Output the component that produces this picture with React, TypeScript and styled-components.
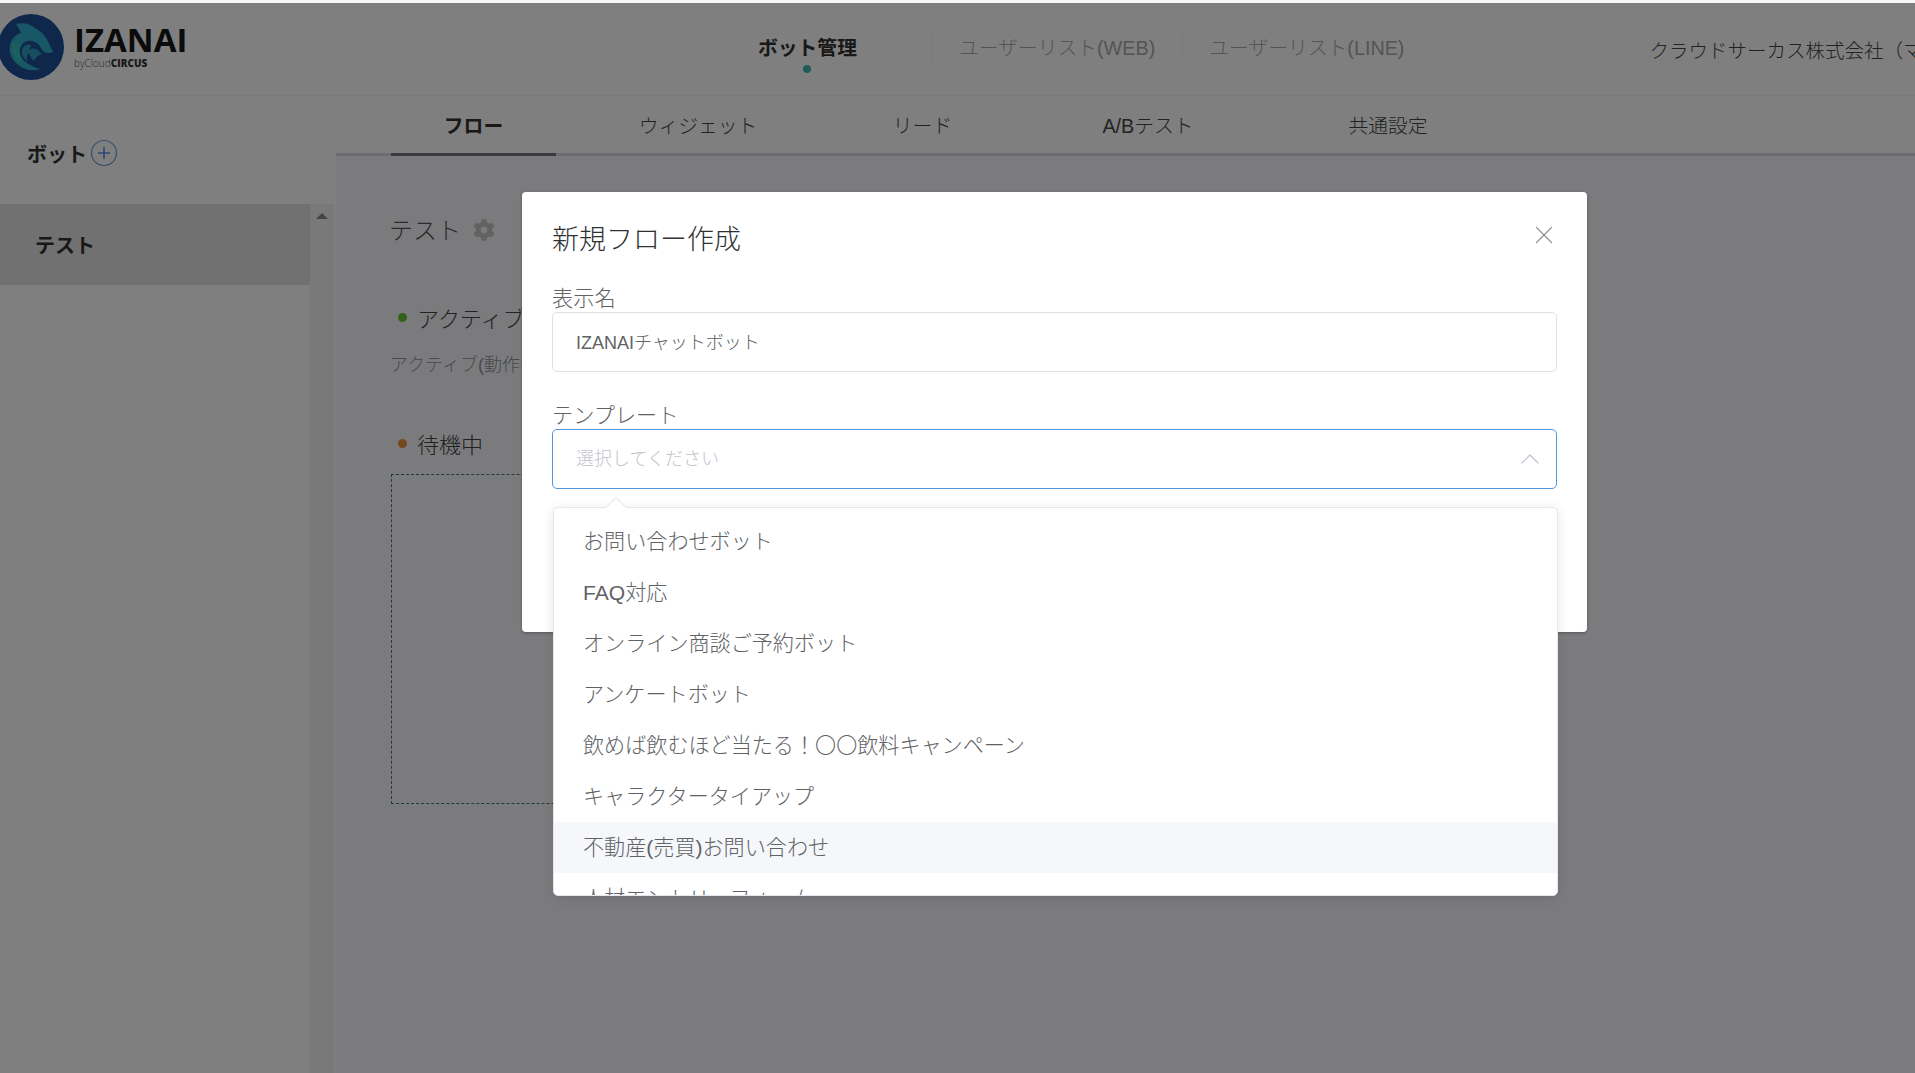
import React from "react";
import styled, { createGlobalStyle } from "styled-components";
import { FaCog } from "react-icons/fa";
import { X, ChevronUp } from "lucide-react";

const FONT = `"Liberation Sans", "Noto Sans CJK JP", sans-serif`;

const Global = createGlobalStyle`
  html, body { margin: 0; padding: 0; height: 100%; overflow: hidden; background: #fff; }
  body { font-family: ${FONT}; font-weight: 300; }
  * { box-sizing: border-box; }
`;

const Page = styled.div`
  width: 1915px;
  height: 1073px;
  padding-top: 3px;
  display: flex;
  flex-direction: column;
  overflow: hidden;
  position: relative;
  background: #f6f7fa;
`;

const Header = styled.header`
  height: 93px;
  flex: none;
  display: flex;
  align-items: center;
  background: #fff;
  border-bottom: 1px solid #f2f2f2;
  white-space: nowrap;
  overflow: hidden;
`;

const Logo = styled.div`
  width: 760px;
  flex: none;
  display: flex;
  align-items: center;
  gap: 10px;
  padding-bottom: 4px;
  margin-left: -2px;
`;

const LogoWords = styled.div`
  display: flex;
  flex-direction: column;
  gap: 2px;
`;

const LogoName = styled.span`
  font-family: "Open Sans", sans-serif;
  font-size: 33px;
  line-height: 30px;
  font-weight: 700;
  color: #161616;
`;

const LogoBy = styled.span`
  font-family: "Open Sans", sans-serif;
  font-size: 10px;
  line-height: 12px;
  color: #555;
  b { color: #333; font-weight: 800; }
`;

const NavItem = styled.a<{ $active?: boolean; $divider?: boolean }>`
  position: relative;
  display: flex;
  align-items: center;
  font-size: 19.8px;
  height: 28px;
  flex: none;
  color: ${(p) => (p.$active ? "#303133" : "#a8a8a8")};
  font-weight: ${(p) => (p.$active ? 700 : 300)};
  padding: ${(p) => (p.$active ? "0 75px 0 0" : "0 27px 0 26px")};
  border-right: ${(p) => (p.$divider ? "1px solid #f0f0f0" : "0")};
  margin-top: -6px;
`;

const ActiveDot = styled.span`
  position: absolute;
  left: 45px;
  top: 33px;
  width: 8px;
  height: 8px;
  border-radius: 50%;
  background: #43b4b4;
`;

const Company = styled.span`
  flex: none;
  margin-left: 218px;
  font-size: 19.5px;
  color: #454545;
`;

const Body = styled.div`
  flex: 1;
  display: flex;
  min-height: 0;
`;

const Sidebar = styled.aside`
  width: 336px;
  flex: none;
  display: flex;
  flex-direction: column;
  background: #fff;
`;

const SideHead = styled.div`
  height: 108px;
  flex: none;
  display: flex;
  align-items: center;
  gap: 3px;
  padding: 6px 0 0 27px;
  font-size: 20px;
  font-weight: 700;
  color: #333;
`;

const SideScroll = styled.div`
  flex: 1;
  display: flex;
`;

const SideList = styled.div`
  width: 310px;
  flex: none;
`;

const SideItem = styled.div`
  height: 81px;
  display: flex;
  align-items: center;
  padding-left: 35px;
  background: #e2e2e2;
  font-size: 20px;
  font-weight: 700;
  color: #303133;
`;

const ScrollTrack = styled.div`
  flex: 1;
  background: #f3f3f3;
  margin-right: 2px;
  position: relative;
`;

const ScrollArrow = styled.span`
  position: absolute;
  left: 6px;
  top: 9px;
  border-left: 6px solid transparent;
  border-right: 6px solid transparent;
  border-bottom: 6px solid #888;
`;

const Main = styled.main`
  flex: 1;
  min-width: 0;
  display: flex;
  flex-direction: column;
`;

const TabBar = styled.nav`
  height: 60px;
  flex: none;
  display: flex;
  gap: 31px;
  padding-left: 55px;
  background: #fff;
  border-bottom: 3px solid #d8dade;
`;

const Tab = styled.a<{ $w: number; $active?: boolean }>`
  width: ${(p) => p.$w}px;
  flex: none;
  height: 60px;
  display: flex;
  align-items: center;
  justify-content: center;
  font-size: 19.8px;
  color: ${(p) => (p.$active ? "#303133" : "#444")};
  font-weight: ${(p) => (p.$active ? 700 : 300)};
  border-bottom: 3px solid ${(p) => (p.$active ? "#72777e" : "transparent")};
`;

const Content = styled.div`
  padding: 55px 0 0 55px;
  display: flex;
  flex-direction: column;
  align-items: flex-start;
`;

const FlowTitle = styled.div`
  display: flex;
  align-items: center;
  gap: 12px;
  height: 34px;
  margin-left: -2px;
  font-size: 24px;
  color: #555;
  svg { color: #c4c4c4; margin-top: 4px; }
`;

const StatusRow = styled.div<{ $top?: number }>`
  display: flex;
  align-items: center;
  gap: 10px;
  padding-left: 7px;
  height: 32px;
  margin-top: ${(p) => p.$top ?? 0}px;
  font-size: 22px;
  color: #444;
`;

const Dot = styled.span<{ $color: string }>`
  width: 9px;
  height: 9px;
  border-radius: 50%;
  background: ${(p) => p.$color};
`;

const Desc = styled.div`
  font-size: 18px;
  color: #909399;
  height: 24px;
  line-height: 24px;
  margin: 20px 0 50px -1px;
`;

const DropZone = styled.div`
  width: 500px;
  height: 330px;
  margin-top: 15px;
  border: 1px dashed #3f7a63;
`;

const Overlay = styled.div`
  position: absolute;
  inset: 3px 0 0 0;
  background: rgba(0, 0, 0, 0.5);
  z-index: 10;
`;

const Modal = styled.div`
  position: absolute;
  z-index: 20;
  left: 522px;
  top: 192px;
  width: 1065px;
  height: 440px;
  padding: 28px 30px 0;
  background: #fff;
  border-radius: 4px;
  box-shadow: 0 1px 3px rgba(0, 0, 0, 0.3);
`;

const ModalTitle = styled.div`
  font-size: 27px;
  line-height: 40px;
  color: #303133;
  margin-bottom: 26px;
`;

const CloseButton = styled.button`
  position: absolute;
  right: 28px;
  top: 28px;
  width: 30px;
  height: 30px;
  padding: 0;
  display: flex;
  align-items: center;
  justify-content: center;
  border: 0;
  background: transparent;
  color: #909399;
`;

const Label = styled.div`
  height: 26px;
  line-height: 26px;
  font-size: 21.2px;
  color: #606266;
  overflow: hidden;
`;

const Field = styled.div<{ $focus?: boolean }>`
  position: relative;
  height: 60px;
  width: 1005px;
  display: flex;
  align-items: center;
  justify-content: space-between;
  padding: 0 10px 0 23px;
  border: 1px solid ${(p) => (p.$focus ? "#4f96e0" : "#dcdfe6")};
  border-radius: 5px;
  font-size: 18px;
  color: #606266;
  margin-bottom: 31px;
`;

const FieldText = styled.span`
  margin-top: -2px;
`;

const Placeholder = styled(FieldText)`
  color: #c0c4cc;
  margin-top: -5px;
`;

const Dropdown = styled.div`
  position: absolute;
  left: 0;
  top: 77px;
  width: 1005px;
  height: 389px;
  background: #fff;
  border: 1px solid #e4e7ed;
  border-radius: 5px;
  box-shadow: 0 2px 12px rgba(0, 0, 0, 0.1);
  &::before {
    content: "";
    position: absolute;
    left: 54px;
    top: -8px;
    width: 15px;
    height: 15px;
    background: #fff;
    border-left: 1px solid #e4e7ed;
    border-top: 1px solid #e4e7ed;
    transform: rotate(45deg);
  }
`;

const Menu = styled.ul`
  position: relative;
  list-style: none;
  margin: 0;
  padding: 8px 0 0;
  height: 100%;
  overflow: hidden;
`;

const MenuItem = styled.li<{ $hover?: boolean }>`
  height: 51px;
  line-height: 51px;
  padding-left: 29px;
  font-size: 21.1px;
  color: #606266;
  background: ${(p) => (p.$hover ? "#f5f7fa" : "transparent")};
`;

const templates = [
  "お問い合わせボット",
  "FAQ対応",
  "オンライン商談ご予約ボット",
  "アンケートボット",
  "飲めば飲むほど当たる！〇〇飲料キャンペーン",
  "キャラクタータイアップ",
  "不動産(売買)お問い合わせ",
  "人材エントリーフォーム",
];

const tabs = [
  { label: "フロー", w: 165, active: true },
  { label: "ウィジェット", w: 222 },
  { label: "リード", w: 165 },
  { label: "A/Bテスト", w: 224 },
  { label: "共通設定", w: 194 },
];

const LogoMark = () => (
  <svg width="66" height="66" viewBox="0 0 66 66" aria-hidden="true">
    <circle cx="33" cy="33" r="33" fill="#1c4f96" />
    <path
      d="M18 10C26 8 32 10 37 14C45 18 50 26 52 32L55 38C51 40 46 39 44 36C42 30 36 26 30 27C24 28 21 34 22 40C24 47 32 52 42 55C33 58 24 55 18 49C12 43 10 35 13 28C15 23 18 21 23 19C22 16 20 13 18 10Z"
      fill="#30aecb"
    />
    <path d="M14 30C13 38 17 46 24 50C22 44 21 36 22 30C19 28 16 28 14 30Z" fill="#3bbfb8" />
    <path
      d="M24 40C23 33 28 29 33 31L31 36C35 33 40 35 44 40C40 41 38 43 36 47C33 44 32 41 31 39C29 41 28 44 30 48C27 46 25 43 24 40Z"
      fill="#2f9fc0"
    />
  </svg>
);

const PlusCircle = () => (
  <svg width="28" height="28" viewBox="0 0 28 28" aria-hidden="true">
    <circle cx="14" cy="14" r="12.5" fill="none" stroke="#6f9bd8" strokeWidth="1.2" />
    <path d="M14 8v12M8 14h12" fill="none" stroke="#5b93e6" strokeWidth="1.6" />
  </svg>
);

export default function App() {
  return (
    <Page>
      <Global />
      <Header>
        <Logo>
          <LogoMark />
          <LogoWords>
            <LogoName>IZANAI</LogoName>
            <LogoBy>
              byCloud<b>CIRCUS</b>
            </LogoBy>
          </LogoWords>
        </Logo>
        <NavItem $active $divider>
          ボット管理
          <ActiveDot />
        </NavItem>
        <NavItem $divider>ユーザーリスト(WEB)</NavItem>
        <NavItem>ユーザーリスト(LINE)</NavItem>
        <Company>クラウドサーカス株式会社（マーケティング）</Company>
      </Header>
      <Body>
        <Sidebar>
          <SideHead>
            ボット
            <PlusCircle />
          </SideHead>
          <SideScroll>
            <SideList>
              <SideItem>テスト</SideItem>
            </SideList>
            <ScrollTrack>
              <ScrollArrow />
            </ScrollTrack>
          </SideScroll>
        </Sidebar>
        <Main>
          <TabBar>
            {tabs.map((t) => (
              <Tab key={t.label} $w={t.w} $active={t.active}>
                {t.label}
              </Tab>
            ))}
          </TabBar>
          <Content>
            <FlowTitle>
              テスト
              <FaCog size={22} />
            </FlowTitle>
            <StatusRow $top={56}>
              <Dot $color="#67c23a" />
              アクティブ
            </StatusRow>
            <Desc>アクティブ(動作中)のフロー</Desc>
            <StatusRow>
              <Dot $color="#e6913c" />
              待機中
            </StatusRow>
            <DropZone />
          </Content>
        </Main>
      </Body>
      <Overlay />
      <Modal>
        <ModalTitle>新規フロー作成</ModalTitle>
        <CloseButton>
          <X size={30} strokeWidth={0.95} />
        </CloseButton>
        <Label>表示名</Label>
        <Field>
          <FieldText>IZANAIチャットボット</FieldText>
        </Field>
        <Label>テンプレート</Label>
        <Field $focus>
          <Placeholder>選択してください</Placeholder>
          <ChevronUp size={32} strokeWidth={0.9} color="#c0c4cc" />
          <Dropdown>
            <Menu>
              {templates.map((t, i) => (
                <MenuItem key={t} $hover={i === 6}>
                  {t}
                </MenuItem>
              ))}
            </Menu>
          </Dropdown>
        </Field>
      </Modal>
    </Page>
  );
}
